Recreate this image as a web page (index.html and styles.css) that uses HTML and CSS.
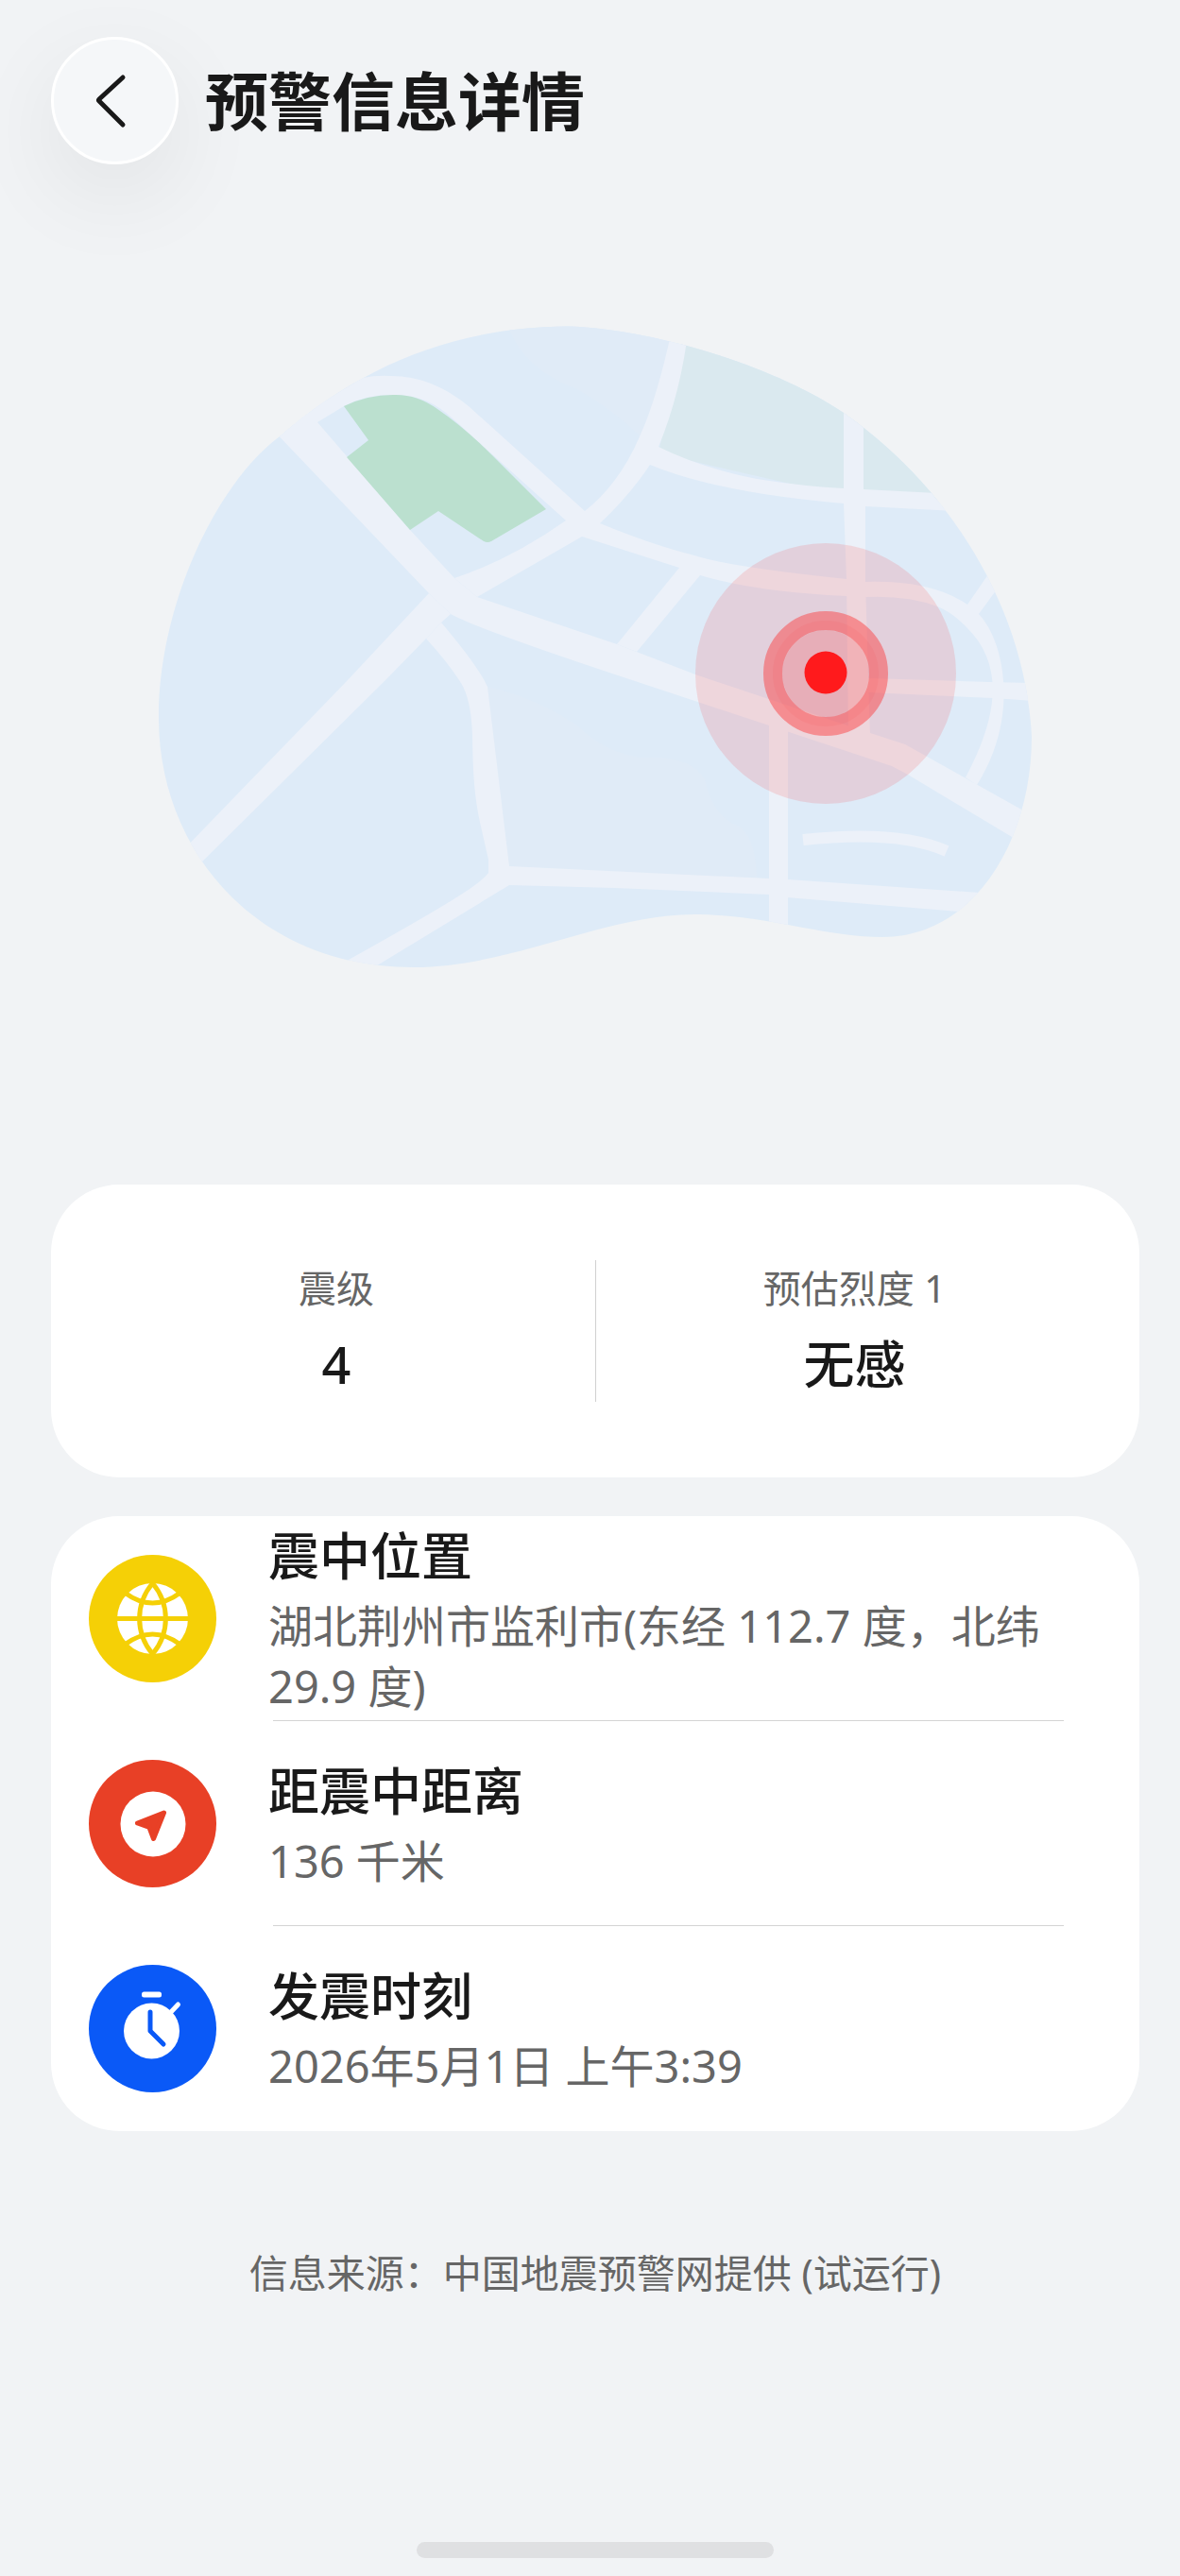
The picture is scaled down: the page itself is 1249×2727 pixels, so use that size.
FILE: index.html
```html
<!DOCTYPE html>
<html lang="zh-CN">
<head>
<meta charset="utf-8">
<meta name="viewport" content="width=device-width, initial-scale=1">
<title>预警信息详情</title>
<link rel="stylesheet" href="styles.css">
</head>
<body>
<div class="page">
  <header class="topbar">
    <button class="back" type="button" aria-label="返回">
      <svg viewBox="0 0 129 129" aria-hidden="true"><path d="M73 40 L48 63 Q47 64 48 65 L73 90"/></svg>
    </button>
    <h1 class="topbar-title">预警信息详情</h1>
  </header>

  <main class="content">
    <svg class="map" viewBox="167 345 925 680" role="img" aria-label="震中地图">
      <defs>
        <clipPath id="land">
          <path d="M167 760C167 640 228 512 295 462C380 388 480 346 600 345.500C690 348 820 388 892 437C1010 520 1085 650 1091 780C1091 890 1030 992 933 992C870 992 810 968 733 968C640 968 540 1024 437 1024C270 1024 167 900 167 760Z"/>
        </clipPath>
      </defs>
      <g clip-path="url(#land)">
        <rect class="land" x="160" y="340" width="940" height="690"/>
        <path class="land-light" d="M535 340Q550 390 610 412Q650 435 680 465L715 340Z"/>
        <path class="land-light" d="M515 727Q565 738 610 768Q640 798 680 802Q730 800 745 825Q752 860 775 872Q800 880 800 935L538 925Z"/>
        <path class="meadow" d="M725 340L696 480L892 525L1010 530L1010 340Z"/>
        <!-- trunk road, north-west to south-east -->
        <path class="road" d="M285 452L453 628L476 650Q500 664 650 714L943 811L960 820L1100 904V868L957 788L920 776L735 714L652 682L504 632L480 612L433 561L335 447L310 420Z"/>
        <path class="road" d="M453 628L367 720L190 903L200 925L407 720L450 676L466 659L476 650Z"/>
        <path class="road" d="M450 676Q472 700 485 720Q498 738 499 780C500 850 505 860 516 910V924Q510 932 490 945Q460 965 350 1026L390 1027L538 937L650 940L813 947L832 950L1050 968V946L833 931L538 917L515 727Q505 705 466 659Z"/>
        <path class="road" d="M813 760V990H833V770Z"/>
        <!-- park loop and its junction -->
        <path class="road" d="M300 450L383 400Q397 397 413 398Q456 398 495 430L618 541Q655 512 677 460Q695 420 711 345H728Q720 415 696 473Q740 495 800 507Q850 515 892 517L913 518L1010 523V541L915 536L892 533Q760 522 687 492Q665 525 634 554Q690 577 734 588Q770 600 895 613L915 616Q985 614 1023 640L1052 598L1062 613L1035 650C1063 680 1078 760 1033 831L1021 823C1060 750 1058 700 1023 665Q1007 648 991 642Q960 630 915 632L895 631Q800 627 740 609L673 690L652 682L718 601L615 568L504 632L480 612Q540 592 598 551L500 463C470 435 455 418 413 418Q385 418 363 430L335 447Z"/>
        <path class="road" d="M892 420V533L895 613L897 780H920L915 616V536L913 518V430Z"/>
        <path class="road" d="M918 718L1046 722L1095 723V742L1050 739L918 733Z"/>
        <path class="lane" d="M849 889Q950 878 1001 901"/>
        <path class="park" d="M363 430Q388 418 415 418Q440 417 462 433Q490 452 520 482L577 539L519 573Q515 575 511 573L463 541L433 561L366 484L389 466Z"/>
      </g>
      <circle class="wave" cx="873" cy="713" r="138"/>
      <circle class="core" cx="873" cy="713" r="46"/>
      <circle class="ring" cx="873" cy="713" r="56"/>
      <circle class="ring-inner" cx="873" cy="713" r="51"/>
      <circle class="epicenter" cx="873" cy="712" r="22.500"/>
    </svg>

    <section class="card summary" aria-label="概要">
      <div class="metric">
        <span class="metric-label">震级</span>
        <strong class="metric-value">4</strong>
      </div>
      <div class="metric">
        <span class="metric-label">预估烈度 1</span>
        <strong class="metric-value">无感</strong>
      </div>
    </section>

    <section class="card details" aria-label="详情">
      <article class="row">
        <svg class="icon" viewBox="0 0 135 135" aria-hidden="true">
          <circle class="yellow" cx="67.500" cy="67.500" r="67.500"/>
          <circle class="white" cx="67.500" cy="67.500" r="37.500"/>
          <path class="globe-line" d="M67.500 30C49 52 49 83 67.500 105C86 83 86 52 67.500 30M29 67.500H106M38 40Q67.500 62 97 40M38 95Q67.500 73 97 95"/>
        </svg>
        <div class="row-text">
          <h2 class="row-title">震中位置</h2>
          <p class="row-detail">湖北荆州市监利市(东经 112.7 度，北纬 29.9 度)</p>
        </div>
      </article>
      <article class="row">
        <svg class="icon" viewBox="0 0 135 135" aria-hidden="true">
          <circle class="red" cx="67.500" cy="67.500" r="67.500"/>
          <circle class="white" cx="68" cy="68" r="34.500"/>
          <path class="arrow" d="M79.500 56L51.500 67L64 71.500L68.500 83.500Z"/>
        </svg>
        <div class="row-text">
          <h2 class="row-title">距震中距离</h2>
          <p class="row-detail">136 千米</p>
        </div>
      </article>
      <article class="row">
        <svg class="icon" viewBox="0 0 135 135" aria-hidden="true">
          <circle class="blue" cx="67.500" cy="67.500" r="67.500"/>
          <circle class="white" cx="66.500" cy="70" r="29.500"/>
          <rect class="white" x="56" y="28.500" width="21" height="6" rx="2.500"/>
          <path class="crown" d="M94.500 42L86 51"/>
          <path class="hands" d="M65 50V70L79 84"/>
        </svg>
        <div class="row-text">
          <h2 class="row-title">发震时刻</h2>
          <p class="row-detail">2026年5月1日 上午3:39</p>
        </div>
      </article>
    </section>

    <p class="source">信息来源：中国地震预警网提供 (试运行)</p>
  </main>
  <div class="home-bar"></div>
</div>
</body>
</html>
```
FILE: styles.css
```css
* { box-sizing: border-box; }

body {
  margin: 0;
  background: #f1f3f5;
  color: #191919;
  font-family: "Noto Sans", "Noto Sans CJK SC", sans-serif;
}

h1, h2, p { margin: 0; }

.page {
  display: flex;
  flex-direction: column;
  min-height: 100vh;
  padding: 39px 43px 19px 54px;
}

.topbar {
  display: flex;
  align-items: center;
  gap: 28px;
}

.back {
  flex: none;
  width: 135px;
  height: 135px;
  padding: 0;
  border: 3px solid #fff;
  border-radius: 50%;
  background: #f5f7f9;
  box-shadow: 0 32px 100px rgba(0, 0, 0, 0.07);
}

.back svg {
  display: block;
  width: 100%;
  height: 100%;
  fill: none;
  stroke: #191919;
  stroke-width: 5;
  stroke-linecap: round;
}

.topbar-title {
  font-size: 67px;
  line-height: 80px;
  font-weight: 700;
}

.content {
  display: flex;
  flex-direction: column;
}

.map {
  display: block;
  align-self: center;
  width: 925px;
  max-width: 100%;
  margin: 171px 0 229px;
}

.land { fill: #deebf8; }
.land-light { fill: #e0ebf7; }
.meadow { fill: #dae9ef; }
.park { fill: #bbe0cf; }
.road { fill: #ecf1f9; }
.lane { fill: none; stroke: #ecf1f9; stroke-width: 12; }
.wave { fill: rgba(255, 50, 50, 0.14); }
.core { fill: rgba(255, 40, 40, 0.2); }
.ring { fill: none; stroke: rgba(255, 40, 40, 0.42); stroke-width: 20; }
.ring-inner { fill: none; stroke: rgba(255, 40, 40, 0.06); stroke-width: 10; }
.epicenter { fill: #ff1a1c; }

.card {
  border-radius: 72px;
  background: #fff;
}

.summary {
  display: grid;
  grid-template-columns: 1fr 1fr;
  padding: 80px 28px;
}

.metric {
  display: flex;
  flex-direction: column;
  align-items: center;
  height: 150px;
}

.metric + .metric { border-left: 1px solid #d1d1d1; }

.metric-label {
  color: #666;
  font-size: 40px;
  line-height: 60px;
}

.metric-value {
  margin-top: 12px;
  font-size: 54px;
  line-height: 76px;
  font-weight: 500;
}

.details {
  margin-top: 41px;
  padding-left: 40px;
}

.row {
  position: relative;
  display: flex;
  align-items: center;
  gap: 55px;
  min-height: 217px;
  padding-right: 80px;
}

.row + .row::before {
  content: "";
  position: absolute;
  top: -1px;
  right: 80px;
  left: 195px;
  height: 1px;
  background: #d4d4d4;
}

.icon {
  flex: none;
  width: 135px;
  height: 135px;
}

.yellow { fill: #f5d006; }
.red { fill: #e84026; }
.blue { fill: #0a59f7; }
.white { fill: #fff; }
.globe-line { fill: none; stroke: #f5d006; stroke-width: 5; }
.arrow { fill: #e84026; stroke: #e84026; stroke-width: 5; stroke-linejoin: round; }
.crown { stroke: #fff; stroke-width: 5; stroke-linecap: round; }
.hands {
  fill: none;
  stroke: #0a59f7;
  stroke-width: 5;
  stroke-linecap: round;
  stroke-linejoin: round;
}

.row-title {
  font-size: 54px;
  line-height: 72px;
  font-weight: 500;
}

.row-detail {
  margin-top: 6px;
  color: #666;
  font-size: 47px;
  line-height: 64px;
}

.source {
  margin-top: 120px;
  color: #666;
  font-size: 41px;
  line-height: 60px;
  text-align: center;
}

.home-bar {
  align-self: center;
  width: 378px;
  max-width: 60%;
  height: 17px;
  margin-top: auto;
  border-radius: 9px;
  background: #dfe0e2;
}
```
